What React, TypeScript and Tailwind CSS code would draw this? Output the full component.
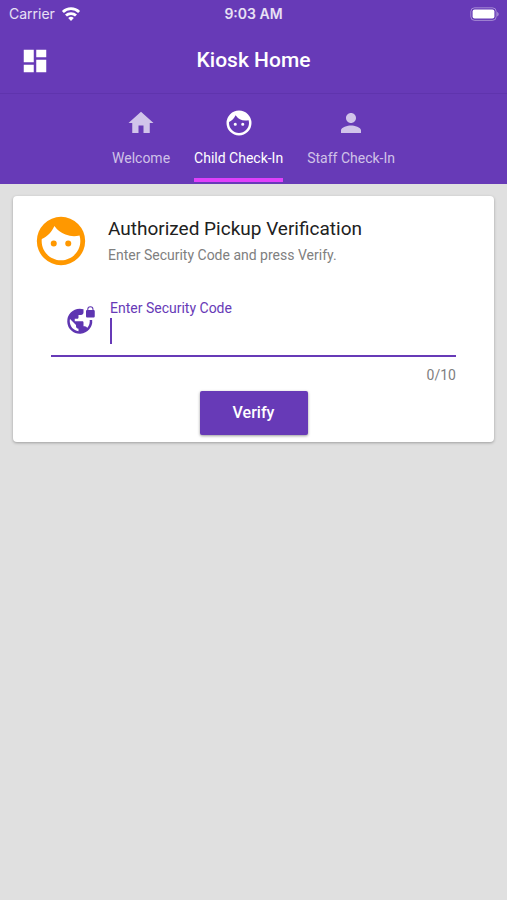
import React, { useState } from "react";
import { MdDashboard, MdHome, MdPerson } from "react-icons/md";

const MAX_CODE_LENGTH = 10;

type IconProps = { className?: string };

const FaceIcon: React.FC<IconProps> = ({ className }) => (
  <svg viewBox="0 0 24 24" fill="currentColor" className={className} aria-hidden="true">
    <path d="M9 11.75a1.25 1.25 0 1 0 0 2.5 1.25 1.25 0 0 0 0-2.5Zm6 0a1.25 1.25 0 1 0 0 2.5 1.25 1.25 0 0 0 0-2.5ZM12 2a10 10 0 1 0 0 20 10 10 0 0 0 0-20Zm0 18c-4.41 0-8-3.59-8-8 0-.29 0-.58.05-.86 2.36-1.05 4.23-2.98 5.21-5.37a9.974 9.974 0 0 0 10.41 3.97c.21.71.33 1.47.33 2.26 0 4.41-3.59 8-8 8Z" />
  </svg>
);

const GlobeLockIcon: React.FC<IconProps> = ({ className }) => (
  <svg viewBox="0 0 24 24" fill="currentColor" className={className} aria-hidden="true">
    <path d="M22 4v-.5a2.5 2.5 0 0 0-5 0V4c-.55 0-1 .45-1 1v4c0 .55.45 1 1 1h5c.55 0 1-.45 1-1V5c0-.55-.45-1-1-1Zm-.8 0h-3.4v-.5a1.7 1.7 0 0 1 3.4 0V4Z" />
    <path d="M18.92 12c.04.33.08.66.08 1 0 2.08-.8 3.97-2.1 5.39-.26-.81-1-1.39-1.9-1.39h-1v-3c0-.55-.45-1-1-1H7v-2h2c.55 0 1-.45 1-1V8h2c1.1 0 2-.9 2-2V3.46c-.95-.3-1.95-.46-3-.46a10 10 0 1 0 9.95 9h-2.03ZM10 20.93c-3.95-.49-7-3.85-7-7.93 0-.62.08-1.21.21-1.79L8 16v1c0 1.1.9 2 2 2v1.93Z" />
  </svg>
);

const tabs = [
  { label: "Welcome", icon: MdHome, active: false },
  { label: "Child Check-In", icon: FaceIcon, active: true },
  { label: "Staff Check-In", icon: MdPerson, active: false },
];

const StatusBar: React.FC = () => (
  <div className="grid grid-cols-3 items-center h-7 px-2 font-[Inter,sans-serif] text-sm text-white/85">
    <div className="flex items-center gap-[6px] pl-px">
      <span>Carrier</span>
      <svg viewBox="0 0 20 15" className="w-5 h-[15px]" fill="none" stroke="white" strokeWidth="2.8">
        <path d="M1.9 5a11.5 11.5 0 0 1 16.2 0" />
        <path d="M5 8.6a7.1 7.1 0 0 1 10 0" />
        <path d="M10 14 7.2 11.1a4 4 0 0 1 5.6 0Z" fill="white" stroke="none" />
      </svg>
    </div>
    <span className="text-center font-semibold">9:03 AM</span>
    <svg viewBox="0 0 31 15" className="w-[31px] h-[15px] justify-self-end">
      <rect x="2.8" y="0.8" width="25.4" height="12.6" rx="3.8" fill="none" stroke="white" strokeOpacity="0.4" />
      <rect x="4.6" y="2.6" width="21.8" height="9" rx="2" fill="white" />
      <path d="M29.2 5v4.4c1.9-.7 1.9-3.7 0-4.4Z" fill="white" fillOpacity="0.45" />
    </svg>
  </div>
);

const Header: React.FC = () => (
  <header className="bg-[#673ab7] text-white">
    <StatusBar />
    <div className="grid grid-cols-[32px_1fr_32px] items-center h-[66px] px-5 border-b border-[#5f34ad]">
      <button type="button" aria-label="Dashboard">
        <MdDashboard className="size-[30px]" />
      </button>
      <h1 className="text-center text-[21px] font-medium">Kiosk Home</h1>
    </div>
    <nav className="flex justify-center gap-6 h-[90px] pb-[2px]">
      {tabs.map(({ label, icon: Icon, active }) => (
        <a
          key={label}
          href="#"
          aria-current={active ? "page" : undefined}
          className={
            active
              ? "flex flex-col items-center pt-[14px] border-b-4 border-[#e040fb]"
              : "flex flex-col items-center pt-[14px] text-white/70"
          }
        >
          <Icon className="size-[30px]" />
          <span className="mt-[10px] text-sm leading-5">{label}</span>
        </a>
      ))}
    </nav>
  </header>
);

const VerificationCard: React.FC = () => {
  const [code, setCode] = useState("");
  const [touched, setTouched] = useState(false);

  return (
    <section className="bg-white rounded-sm shadow-[0_1px_3px_rgba(0,0,0,0.3)] pt-4 pb-[7px]">
      <div className="flex items-center gap-[18px] px-[19px]">
        <FaceIcon className="size-[58px] shrink-0 text-[#ff9800]" />
        <div>
          <h2 className="text-[19px] leading-7 text-[#212121]">Authorized Pickup Verification</h2>
          <p className="text-sm leading-6 text-[#808080]">Enter Security Code and press Verify.</p>
        </div>
      </div>

      <form className="mt-7 px-[38px]" onSubmit={(e) => e.preventDefault()}>
        <div className="flex items-start border-b-2 border-[#673ab7] pb-[9px]">
          <GlobeLockIcon className="size-[30px] shrink-0 mt-[7px] ml-[15px] text-[#5e35b1]" />
          <div className="relative flex-1 ml-[14px]">
            <label htmlFor="security-code" className="block text-sm leading-5 text-[#673ab7]">
              Enter Security Code
            </label>
            <input
              id="security-code"
              value={code}
              maxLength={MAX_CODE_LENGTH}
              onFocus={() => setTouched(true)}
              onChange={(e) => setCode(e.target.value)}
              className="block w-full h-7 text-xl text-[#212121] caret-[#673ab7] outline-none"
            />
            {/* resting cursor, until the field takes its own */}
            {!touched && (
              <span className="absolute left-0 bottom-[2px] w-[2px] h-[26px] bg-[#673ab7] pointer-events-none" />
            )}
          </div>
        </div>
        <p className="mt-2 text-right text-sm leading-5 text-[#808080]">
          {code.length}/{MAX_CODE_LENGTH}
        </p>
        <button
          type="submit"
          className="block mx-auto mt-[6px] w-[108px] h-11 rounded-[2px] bg-[#673ab7] text-white text-base font-medium shadow-[0_1px_3px_rgba(0,0,0,0.4)]"
        >
          Verify
        </button>
      </form>
    </section>
  );
};

export default function App() {
  return (
    <div className="min-h-screen bg-[#e0e0e0] font-[Roboto,sans-serif]">
      <Header />
      <main className="px-[13px] py-3">
        <VerificationCard />
      </main>
    </div>
  );
}
